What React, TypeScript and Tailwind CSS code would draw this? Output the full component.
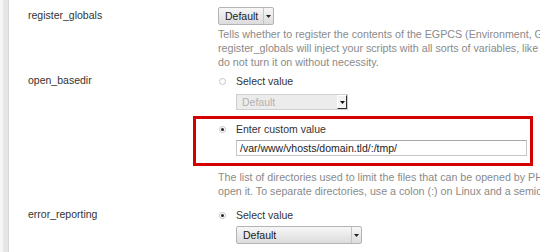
import React from "react";

function Arrow({ color = "#222" }: { color?: string }) {
  return (
    <svg width="5" height="3" viewBox="0 0 5 3" className="block">
      <polygon points="0,0 5,0 2.5,3" fill={color} />
    </svg>
  );
}

function Radio({ checked }: { checked?: boolean }) {
  return (
    <span className="ml-[1px] w-[7px] h-[7px] rounded-full border border-[#c4c4c4] bg-white flex items-center justify-center shrink-0">
      {checked ? <span className="w-[3px] h-[3px] rounded-full bg-[#222]" /> : null}
    </span>
  );
}

function RadioRow({ checked, label }: { checked?: boolean; label: string }) {
  return (
    <div className="h-[16px] flex items-center">
      <Radio checked={checked} />
      <span className="ml-[10px] text-[#333] leading-[16px]">{label}</span>
    </div>
  );
}

function Select({ width, text }: { width: string; text: string }) {
  return (
    <div
      className={`${width} h-[18px] flex border border-[#b4b4b4] rounded-[2px] bg-gradient-to-b from-[#f7f7f7] to-[#dcdcdc]`}
    >
      <div className="flex-1 flex items-center pl-[6px] text-[#222] leading-none">{text}</div>
      <div className="w-[10px] border-l border-[#c4c4c4] flex items-center justify-center">
        <Arrow />
      </div>
    </div>
  );
}

export default function App() {
  return (
    <div
      className="w-[540px] h-[252px] overflow-hidden bg-white flex text-[10.5px]"
      style={{ fontFamily: '"Liberation Sans", Arial, sans-serif' }}
    >
      <div className="w-[3px] bg-[#f6f6f6] shrink-0" />
      <div className="w-[5px] bg-[#e6e6e6] border-r border-[#d6d6d6] shrink-0 box-content" />
      <div className="flex-1 min-w-0 pt-[7px]">
        {/* register_globals */}
        <div className="grid grid-cols-[209px_1fr]">
          <div className="pl-[19px] h-[18px] flex items-center text-[#333]">register_globals</div>
          <div className="min-w-0">
            <Select width="w-[56px]" text="Default" />
            <div className="mt-[2px] text-[#8a8a8a] text-[10.7px] leading-[14px] whitespace-nowrap">
              <div>Tells whether to register the contents of the EGPCS (Environment, GET, POST, Cookie, Server) variables as global variables.</div>
              <div>register_globals will inject your scripts with all sorts of variables, like request variables from HTML forms. Thus, you should</div>
              <div>do not turn it on without necessity.</div>
            </div>
          </div>
        </div>

        {/* open_basedir */}
        <div className="grid grid-cols-[209px_1fr] mt-[4px]">
          <div className="pl-[19px] h-[16px] flex items-center text-[#333]">open_basedir</div>
          <div className="min-w-0">
            <RadioRow label="Select value" />
            <div className="mt-[5px] ml-[18px] w-[112px] h-[16px] flex border border-[#cfcfcf] bg-[#ececec]">
              <div className="flex-1 flex items-center pl-[5px] text-[#b2b2b2] leading-none">Default</div>
              <div className="w-[10px] bg-[#f2f2f2] border-t border-l border-[#ffffff] border-r border-b border-r-[#303030] border-b-[#303030] flex items-center justify-center">
                <Arrow color="#111" />
              </div>
            </div>
            <div className="mt-[6px] -ml-[25px] w-[340px] border-[3px] border-[#d40000] pl-[22px] pt-[2px] pb-[7px]">
              <RadioRow checked label="Enter custom value" />
              <div className="mt-[3px] ml-[18px] w-[291px] h-[16px] border border-[#c6c6c6] border-t-[#a8a8a8] bg-white flex items-center pl-[3px] text-[#222] leading-none">
                /var/www/vhosts/domain.tld/:/tmp/
              </div>
            </div>
            <div className="mt-[4px] text-[#8a8a8a] text-[10.7px] leading-[14px] whitespace-nowrap">
              <div>The list of directories used to limit the files that can be opened by PHP. If a file is outside of the given directories, PHP refuses to</div>
              <div>open it. To separate directories, use a colon (:) on Linux and a semicolon (;) on Windows.</div>
            </div>
          </div>
        </div>

        {/* error_reporting */}
        <div className="grid grid-cols-[209px_1fr] mt-[9px]">
          <div className="pl-[19px] h-[16px] flex items-center text-[#333]">error_reporting</div>
          <div className="min-w-0">
            <RadioRow checked label="Select value" />
            <div className="mt-[3px] ml-[18px]">
              <Select width="w-[126px]" text="Default" />
            </div>
          </div>
        </div>
      </div>
    </div>
  );
}
